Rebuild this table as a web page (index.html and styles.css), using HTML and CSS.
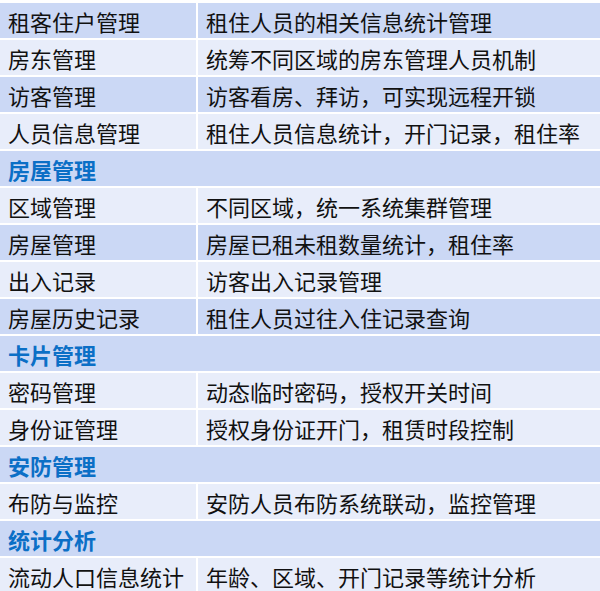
FILE: index.html
```html
<!DOCTYPE html>
<html lang="zh-CN">
<head>
<meta charset="utf-8">
<link rel="stylesheet" href="styles.css">
</head>
<body>
<div class="table">
  <div class="cell dark">租客住户管理</div><div class="cell dark">租住人员的相关信息统计管理</div>
  <div class="cell light">房东管理</div><div class="cell light">统筹不同区域的房东管理人员机制</div>
  <div class="cell dark">访客管理</div><div class="cell dark">访客看房、拜访，可实现远程开锁</div>
  <div class="cell light">人员信息管理</div><div class="cell light">租住人员信息统计，开门记录，租住率</div>
  <div class="cell dark section">房屋管理</div>
  <div class="cell light">区域管理</div><div class="cell light">不同区域，统一系统集群管理</div>
  <div class="cell dark">房屋管理</div><div class="cell dark">房屋已租未租数量统计，租住率</div>
  <div class="cell light">出入记录</div><div class="cell light">访客出入记录管理</div>
  <div class="cell dark">房屋历史记录</div><div class="cell dark">租住人员过往入住记录查询</div>
  <div class="cell dark section">卡片管理</div>
  <div class="cell light">密码管理</div><div class="cell light">动态临时密码，授权开关时间</div>
  <div class="cell light">身份证管理</div><div class="cell light">授权身份证开门，租赁时段控制</div>
  <div class="cell dark section">安防管理</div>
  <div class="cell light">布防与监控</div><div class="cell light">安防人员布防系统联动，监控管理</div>
  <div class="cell dark section">统计分析</div>
  <div class="cell light">流动人口信息统计</div><div class="cell light">年龄、区域、开门记录等统计分析</div>
</div>
</body>
</html>
```
FILE: styles.css
```css
html, body {
  margin: 0;
  padding: 0;
  background: #ffffff;
}
body {
  width: 600px;
  height: 591px;
  overflow: hidden;
  font-family: "Noto Sans CJK SC", "Noto Sans", sans-serif;
}
.table {
  display: grid;
  grid-template-columns: 196px 1fr;
  grid-auto-rows: 35px;
  gap: 2px;
  padding-top: 3px;
}
.cell {
  display: flex;
  align-items: center;
  padding-left: 8px;
  font-size: 22px;
  color: #111111;
  white-space: nowrap;
}
.dark {
  background: #cbd8f5;
}
.light {
  background: #e8edfa;
}
.section {
  grid-column: 1 / span 2;
  color: #0b6fc6;
  font-weight: bold;
}
```
